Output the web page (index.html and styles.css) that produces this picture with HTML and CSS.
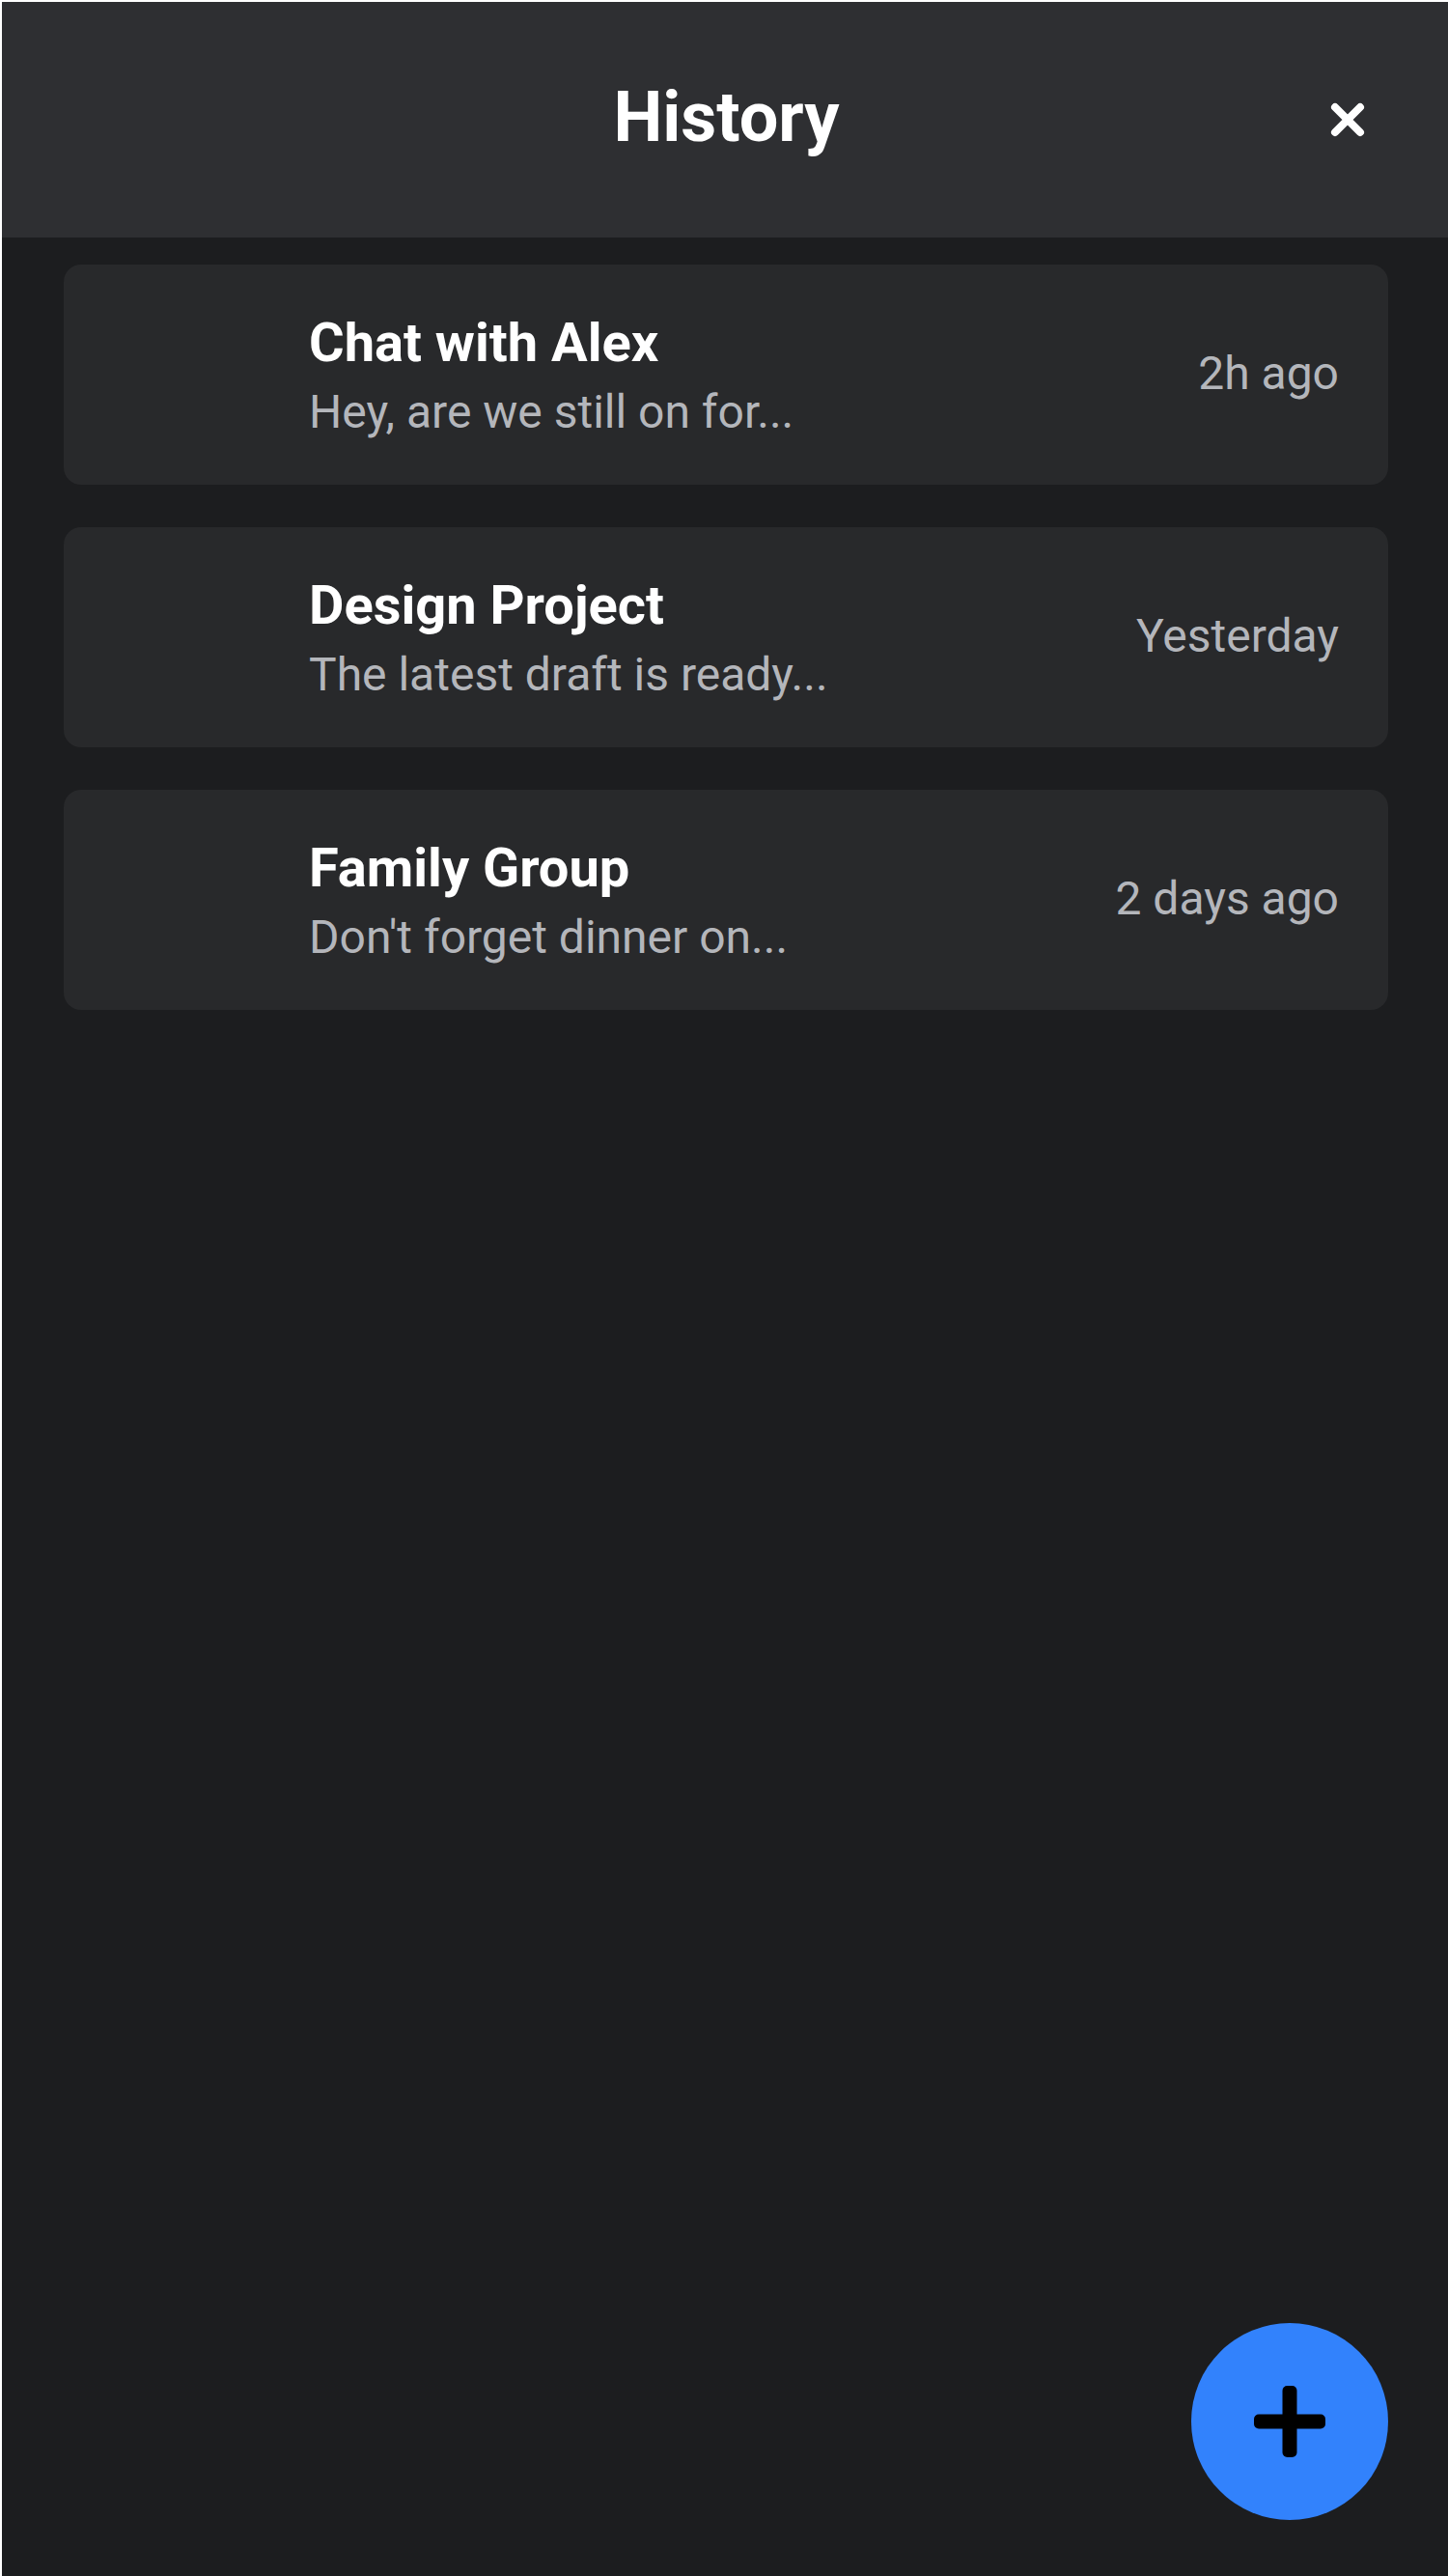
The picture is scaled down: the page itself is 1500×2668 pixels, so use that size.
FILE: index.html
```html
<!DOCTYPE html>
<html lang="en">
<head>
<meta charset="utf-8">
<title>History</title>
<link rel="stylesheet" href="styles.css">
</head>
<body>
<div class="app">
  <header class="topbar">
    <span class="spacer"></span>
    <h1 class="title">History</h1>
    <button class="close" aria-label="Close">
      <svg viewBox="0 0 36 36" width="36" height="36"><path d="M5 5 L31 31 M31 5 L5 31" stroke="#fff" stroke-width="8" stroke-linecap="round" fill="none"/></svg>
    </button>
  </header>
  <main class="list">
    <div class="item">
      <div class="avatar"></div>
      <div class="text">
        <div class="name">Chat with Alex</div>
        <div class="preview">Hey, are we still on for...</div>
      </div>
      <div class="time">2h ago</div>
    </div>
    <div class="item">
      <div class="avatar"></div>
      <div class="text">
        <div class="name">Design Project</div>
        <div class="preview">The latest draft is ready...</div>
      </div>
      <div class="time">Yesterday</div>
    </div>
    <div class="item">
      <div class="avatar"></div>
      <div class="text">
        <div class="name">Family Group</div>
        <div class="preview">Don't forget dinner on...</div>
      </div>
      <div class="time">2 days ago</div>
    </div>
  </main>
  <button class="fab" aria-label="New chat">
    <svg viewBox="0 0 74 74" width="74" height="74"><rect x="0" y="29.5" width="74" height="15" rx="5" fill="#000"/><rect x="29.5" y="0" width="15" height="74" rx="5" fill="#000"/></svg>
  </button>
</div>
</body>
</html>
```
FILE: styles.css
```css
html, body {
  margin: 0;
  padding: 0;
  overflow: hidden;
  background: #ffffff;
}
.app {
  position: relative;
  margin: 2px 0 0 2px;
  width: 1500px;
  height: 2668px;
  background: #1c1d1f;
  font-family: Roboto, "Liberation Sans", sans-serif;
}
.topbar {
  height: 244px;
  background: #2e2f32;
  display: grid;
  grid-template-columns: 1fr auto 1fr;
  align-items: center;
  padding: 0 88px 0 89px;
  box-sizing: border-box;
}
.title {
  margin: 0;
  color: #ffffff;
  font-size: 72px;
  font-weight: 700;
  line-height: 1;
  padding-bottom: 4px;
}
.close {
  justify-self: end;
  width: 36px;
  height: 36px;
  padding: 0;
  border: 0;
  background: none;
  display: flex;
}
.list {
  padding: 28px 64px 0;
  display: flex;
  flex-direction: column;
  gap: 44px;
}
.item {
  height: 228px;
  background: #28292b;
  border-radius: 18px;
  display: flex;
  align-items: center;
  padding: 0 51px 0 32px;
  box-sizing: border-box;
}
.avatar {
  width: 176px;
  height: 176px;
  margin-right: 46px;
  flex: none;
}
.text {
  flex: 1;
  display: flex;
  flex-direction: column;
}
.name {
  color: #ffffff;
  font-size: 56px;
  font-weight: 700;
  margin-bottom: 10px;
}
.preview {
  color: #b4b6bb;
  font-size: 48px;
}
.time {
  color: #b4b6bb;
  font-size: 48px;
  padding-bottom: 3px;
}
.fab {
  position: absolute;
  right: 64px;
  bottom: 60px;
  width: 204px;
  height: 204px;
  border-radius: 50%;
  border: 0;
  padding: 0;
  background: #3282fc;
  display: flex;
  align-items: center;
  justify-content: center;
}
```
